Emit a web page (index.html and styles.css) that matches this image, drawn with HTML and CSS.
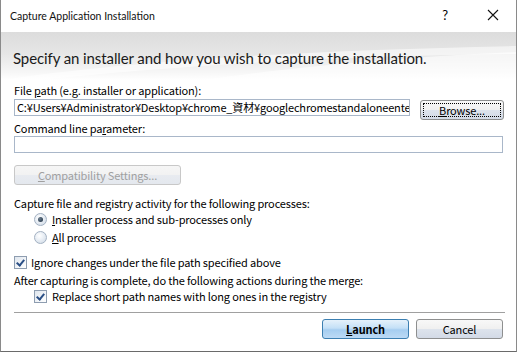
FILE: index.html
```html
<!DOCTYPE html>
<html lang="en">
<head>
    <meta charset="UTF-8">
    <title>Capture Application Installation</title>
    <link rel="stylesheet" href="styles.css">
</head>
<body>
    <div class="window">
        <div class="titlebar">
            <span class="title">Capture Application Installation</span>
            <span class="help">?</span>
            <svg class="close" width="12" height="12" viewBox="0 0 12 12">
                <path d="M1 1 L11 11 M11 1 L1 11" stroke="#111" stroke-width="1.1" fill="none"/>
            </svg>
        </div>

        <div class="banner">
            <svg class="swoosh" width="517" height="48" viewBox="0 0 517 48" preserveAspectRatio="none">
                <path d="M0 48 C 120 30, 300 18, 517 14 L517 22 C 320 24, 150 36, 40 48 Z" fill="#ffffff" opacity="0.55"/>
                <path d="M200 48 C 300 34, 420 24, 517 20 L517 48 Z" fill="#ffffff" opacity="0.6"/>
            </svg>
            <h1>Specify an installer and how you wish to capture the installation.</h1>
        </div>

        <div class="content">
            <div class="label">File <u>p</u>ath (e.g. installer or application):</div>
            <div class="path-row">
                <div class="textbox path">C:¥Users¥Administrator¥Desktop¥chrome_資材¥googlechromestandaloneenterprise64.msi</div>
                <button class="btn browse"><span class="focus"><u>B</u>rowse...</span></button>
            </div>

            <div class="label cmd">Command line pa<u>r</u>ameter:</div>
            <div class="textbox cmd-box"></div>

            <button class="btn compat" disabled><u>C</u>ompatibility Settings...</button>

            <div class="label capture">Capture file and registry activity for the following processes:</div>
            <div class="option indent">
                <span class="radio checked"></span>
                <span><u>I</u>nstaller process and sub-processes only</span>
            </div>
            <div class="option indent">
                <span class="radio"></span>
                <span><u>A</u>ll processes</span>
            </div>

            <div class="option ignore">
                <span class="check"></span>
                <span>I<u>g</u>nore changes under the file path specified above</span>
            </div>
            <div class="label after">After capturing is complete, do the following actions during the merge:</div>
            <div class="option indent">
                <span class="check"></span>
                <span>Replace short path names with long ones in the registry</span>
            </div>

            <hr class="separator">

            <div class="actions">
                <button class="btn default"><u>L</u>aunch</button>
                <button class="btn">Cancel</button>
            </div>
        </div>
    </div>
</body>
</html>
```

FILE: styles.css
```css
* {
    margin: 0;
    padding: 0;
    box-sizing: border-box;
}

body {
    width: 517px;
    height: 352px;
    overflow: hidden;
    background: #ffffff;
    font-family: "Noto Sans CJK JP", "Liberation Sans", sans-serif;
    font-size: 11px;
    letter-spacing: -0.15px;
    line-height: 14px;
    color: #000;
}

.window {
    width: 517px;
    height: 352px;
    border-left: 1px solid #8a8a8a;
    border-right: 1px solid #8a8a8a;
    border-bottom: 1px solid #6a6a6a;
    display: flex;
    flex-direction: column;
}

.titlebar {
    height: 32px;
    display: flex;
    align-items: center;
    padding-left: 9px;
    font-family: Lato, "Noto Sans", sans-serif;
    font-size: 10.5px;
    letter-spacing: 0;
}

.title {
    flex: 1;
    margin-top: -1px;
    color: #111;
}

.help {
    font-size: 13px;
    margin-right: 39px;
    margin-top: -2px;
}

.close {
    margin-right: 17px;
    margin-top: -2px;
}

.banner {
    position: relative;
    height: 48px;
    background: linear-gradient(to bottom, #dcdcdc 0%, #e6e6e6 45%, #f7f7f7 85%, #ffffff 100%);
    display: flex;
    align-items: center;
    padding-left: 12px;
    overflow: hidden;
}

.swoosh {
    position: absolute;
    left: 0;
    top: 0;
}

.banner h1 {
    position: relative;
    font-family: Lato, "Noto Sans", sans-serif;
    font-weight: normal;
    font-size: 15px;
    letter-spacing: -0.1px;
    line-height: 18px;
    color: #1a1a1a;
    margin-top: 4px;
    white-space: nowrap;
}

.content {
    flex: 1;
    display: flex;
    flex-direction: column;
    padding: 3px 13px 0 13px;
}

.label {
    height: 14px;
    white-space: nowrap;
}

u {
    text-decoration: underline;
    text-underline-offset: 1px;
}

.path-row {
    display: flex;
    align-items: flex-start;
    margin-top: 2px;
}

.textbox {
    height: 17px;
    border: 1px solid #a9b7c9;
    background: #fff;
    line-height: 15px;
    padding: 0 2px;
    white-space: nowrap;
    overflow: hidden;
}

.path {
    width: 396px;
    flex: none;
}

.btn {
    font-family: "Noto Sans CJK JP", "Liberation Sans", sans-serif;
    font-size: 11px;
    letter-spacing: -0.15px;
    line-height: 14px;
    color: #000;
    height: 20px;
    width: 87px;
    border: 1px solid #8e8f8f;
    border-radius: 3px;
    background: linear-gradient(to bottom, #f8f8f8 0%, #f0f0f0 48%, #dde3ec 52%, #d3dae6 100%);
    display: flex;
    align-items: center;
    justify-content: center;
    flex: none;
}

.browse {
    width: 84px;
    margin-left: 10px;
    margin-top: 1px;
    padding: 2px;
}

.focus {
    width: 100%;
    height: 100%;
    border: 1px dotted #000;
    display: flex;
    align-items: center;
    justify-content: center;
}

.cmd {
    margin-top: 1px;
}

.cmd-box {
    width: 489px;
    margin-top: 1px;
}

.compat {
    width: 167px;
    margin-top: 12px;
    color: #a0a0a0;
    border-color: #c8c8c8;
    background: linear-gradient(to bottom, #f6f6f6 0%, #f2f2f2 48%, #e8ebf0 52%, #e4e8ee 100%);
}

.capture {
    margin-top: 11px;
}

.option {
    display: flex;
    align-items: center;
    height: 18px;
    gap: 5px;
    white-space: nowrap;
    flex: none;
}

.indent {
    padding-left: 20px;
}

.radio {
    width: 13px;
    height: 13px;
    border-radius: 50%;
    border: 1px solid #a3b1c2;
    background: radial-gradient(circle at 40% 35%, #ffffff 0%, #e6ecf3 50%, #cdd7e3 100%);
    display: flex;
    align-items: center;
    justify-content: center;
}

.radio.checked::after {
    content: "";
    width: 5px;
    height: 5px;
    border-radius: 50%;
    background: radial-gradient(circle at 35% 35%, #6a7c8e, #1c2d3e);
}

.ignore {
    margin-top: 7px;
    gap: 4px;
}

.check {
    width: 13px;
    height: 13px;
    border: 1px solid #8e9db0;
    background: linear-gradient(135deg, #dfe6ee, #ffffff);
    position: relative;
}

.check::after {
    content: "";
    position: absolute;
    left: 3px;
    top: 1px;
    width: 3px;
    height: 6px;
    border-right: 2px solid #2a4f86;
    border-bottom: 2px solid #2a4f86;
    transform: rotate(40deg);
}

.after {
    margin-top: 2px;
}

.separator {
    border: none;
    border-top: 1px solid #a0a0a0;
    margin-top: 7px;
    width: 491px;
    flex: none;
}

.actions {
    display: flex;
    justify-content: flex-end;
    gap: 7px;
    margin-top: 6px;
}

.default {
    font-weight: bold;
    border-color: #3c7fb1;
    background: linear-gradient(to bottom, #e5f1fb 0%, #c4e0f7 45%, #a5cdf0 55%, #bcdaf5 100%);
}
```
